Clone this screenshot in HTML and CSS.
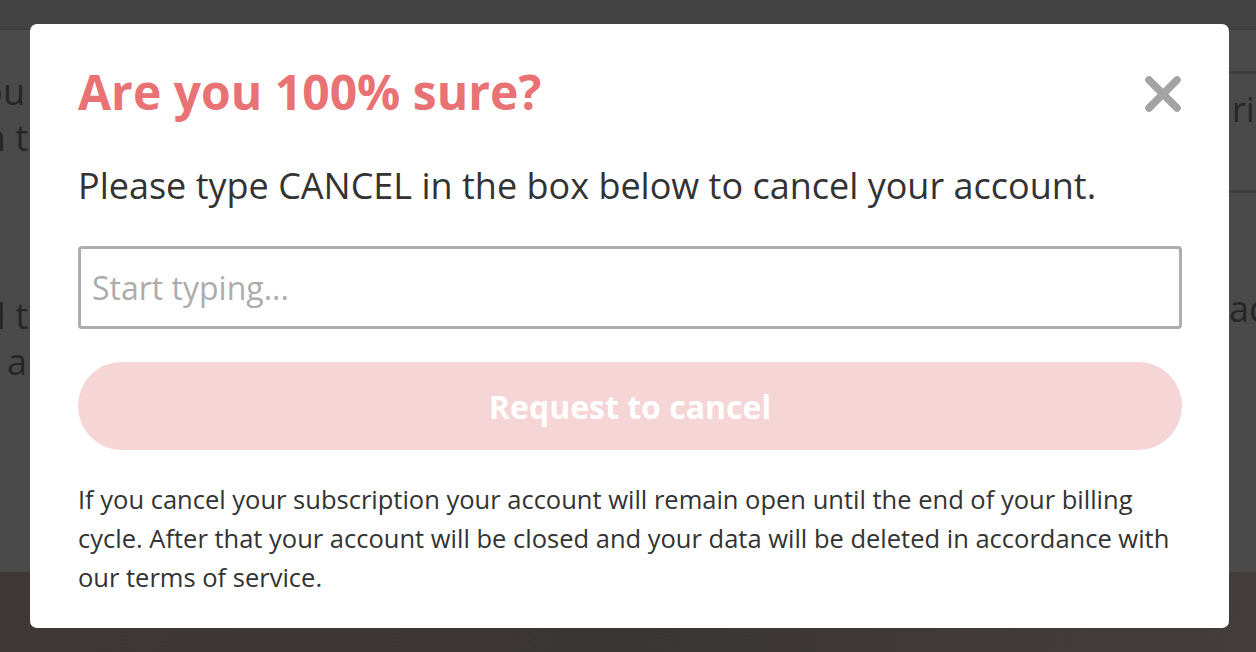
FILE: index.html
```html
<!DOCTYPE html>
<html lang="en">
<head>
<meta charset="utf-8">
<title>Cancel account</title>
<link rel="stylesheet" href="styles.css">
</head>
<body>
<div class="page">
  <header class="topbar"></header>
  <main class="content">
    <div class="col-left">
      <p class="bg-line first pad5">you</p>
      <p class="bg-line pad2">on t</p>
      <p class="bg-line second pad2">and t</p>
      <p class="bg-line start7">ar</p>
    </div>
    <div class="col-mid"></div>
    <div class="col-right">
      <div class="bg-box"><span class="bg-box-text">ri</span></div>
      <p class="bg-line right-act">act</p>
    </div>
  </main>
  <footer class="bottombar"></footer>
</div>

<div class="modal" role="dialog" aria-labelledby="modal-title">
  <div class="modal-head">
    <h1 class="modal-title" id="modal-title">Are you 100% sure?</h1>
    <button class="close-btn" type="button" aria-label="Close">
      <svg width="38" height="38" viewBox="0 0 38 38" aria-hidden="true">
        <path d="M5 5 L33 33 M33 5 L5 33" stroke="#a3a3a3" stroke-width="7.5" stroke-linecap="round" fill="none"/>
      </svg>
    </button>
  </div>
  <p class="modal-sub">Please type CANCEL in the box below to cancel your account.</p>
  <input class="confirm-input" type="text" placeholder="Start typing...">
  <button class="cancel-btn" type="button">Request to cancel</button>
  <p class="modal-note">If you cancel your subscription your account will remain open until the end of your billing cycle. After that your account will be closed and your data will be deleted in accordance with our terms of service.</p>
</div>
</body>
</html>
```

FILE: styles.css
```css
* { box-sizing: border-box; }

html, body {
  margin: 0;
  padding: 0;
  height: 100%;
}

body {
  font-family: "Open Sans", "Liberation Sans", sans-serif;
  background: #4a4a4a;
  overflow: hidden;
}

.page {
  height: 652px;
  display: grid;
  grid-template-rows: 30px 542px 1fr;
}

.topbar {
  background: #434343;
  border-bottom: 2px solid #3d3d3d;
}

.content {
  display: grid;
  grid-template-columns: 30px 1fr 65px;
  background: #4a4a4a;
}

.col-left {
  display: flex;
  flex-direction: column;
  overflow: hidden;
}

.bg-line {
  margin: 0;
  font-size: 36px;
  line-height: 46px;
  color: #262626;
  white-space: nowrap;
}

.col-left .bg-line {
  width: 100%;
  display: flex;
  justify-content: flex-end;
}

.pad5 { padding-right: 5px; }
.pad2 { padding-right: 2px; }

.col-left .bg-line.start7 {
  justify-content: flex-start;
  padding-left: 7px;
}

.bg-line.first { margin-top: 39px; }
.bg-line.second { margin-top: 132px; }

.col-right {
  overflow: hidden;
  display: flex;
  flex-direction: column;
}

.bg-box {
  margin-top: 41px;
  height: 122px;
  border-top: 3px solid #3c3c3c;
  border-bottom: 3px solid #3c3c3c;
  padding: 12px 0 0 41px;
}

.bg-box-text {
  font-size: 34px;
  line-height: 46px;
  color: #262626;
  white-space: nowrap;
}

.right-act {
  margin-top: 93px;
  padding-left: 38px;
}

.bottombar {
  background: linear-gradient(100deg, #3f3837 0%, #3b3636 50%, #433d3c 100%);
}

/* Modal */
.modal {
  position: absolute;
  left: 30px;
  top: 24px;
  width: 1199px;
  height: 604px;
  background: #ffffff;
  border-radius: 7px;
  padding: 38px 47px 0 48px;
  display: flex;
  flex-direction: column;
}

.modal-head {
  display: flex;
  align-items: center;
  justify-content: space-between;
}

.modal-title {
  margin: 0;
  font-size: 48px;
  line-height: 60px;
  font-weight: 700;
  color: #e97275;
}

.close-btn {
  border: 0;
  background: none;
  padding: 0;
  width: 38px;
  height: 38px;
  display: flex;
  cursor: pointer;
  margin-top: 4px;
}

.modal-sub {
  margin: 42px 0 0;
  font-size: 36px;
  line-height: 44px;
  color: #333333;
}

.confirm-input {
  margin-top: 38px;
  width: 100%;
  height: 83px;
  border: 3px solid #adadad;
  border-radius: 4px;
  padding: 0 11px;
  font-family: "Open Sans", "Liberation Sans", sans-serif;
  font-size: 32px;
  color: #333333;
  outline: none;
}

.confirm-input::placeholder {
  color: #acacac;
}

.cancel-btn {
  margin-top: 33px;
  width: 100%;
  height: 88px;
  border: 0;
  border-radius: 44px;
  background: #f6d5d7;
  color: #ffffff;
  font-family: "Open Sans", "Liberation Sans", sans-serif;
  font-size: 32px;
  font-weight: 700;
  cursor: pointer;
}

.modal-note {
  margin: 30px 0 0;
  font-size: 25.5px;
  line-height: 39px;
  color: #333333;
}
```
